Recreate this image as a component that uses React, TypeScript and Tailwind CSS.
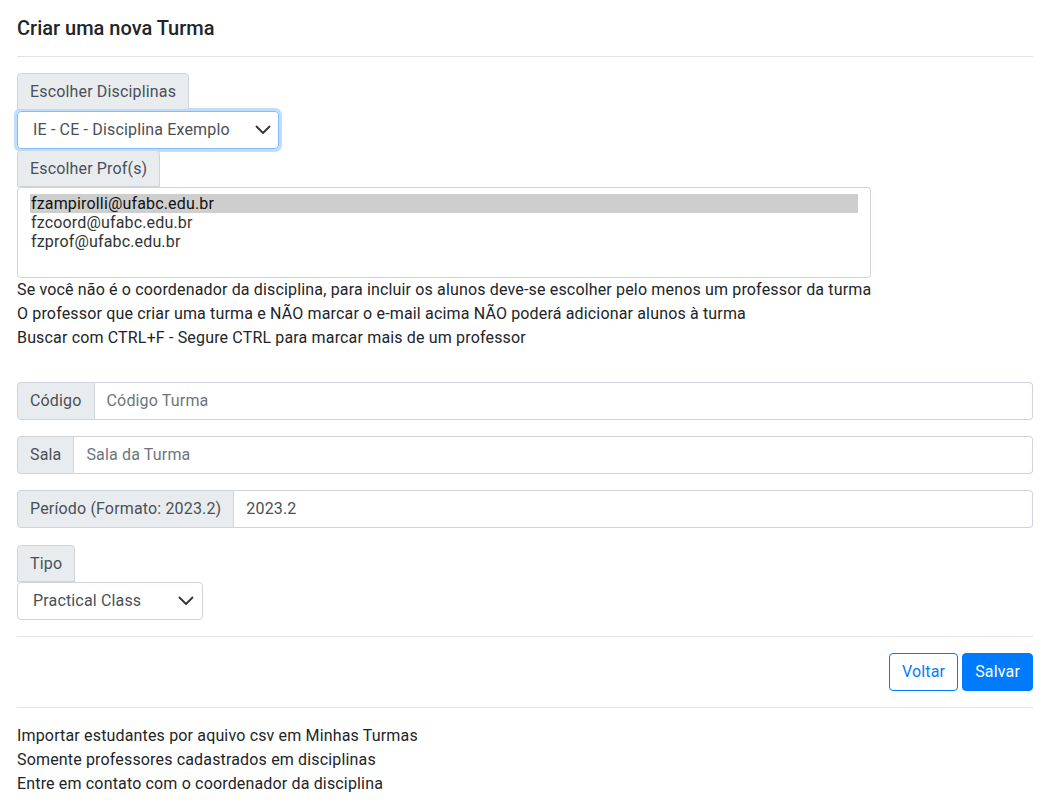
import React from 'react';

const Chevron = () => (
  <svg width="16" height="10" viewBox="0 0 16 10" fill="none" className="shrink-0">
    <path d="M1.5 1.5 L8 8 L14.5 1.5" stroke="#333" strokeWidth="1.8" strokeLinecap="round" strokeLinejoin="round" />
  </svg>
);

const LabelTab = ({ children }: { children: React.ReactNode }) => (
  <div className="flex">
    <span className="flex h-[37px] items-center rounded-t-[4px] border border-[#ced4da] bg-[#e9ecef] px-3 text-[#495057]">
      {children}
    </span>
  </div>
);

type InputGroupProps = { label: string; placeholder?: string; value?: string };

const InputGroup = ({ label, placeholder, value }: InputGroupProps) => (
  <div className="mb-4 flex h-[38px]">
    <span className="flex items-center whitespace-nowrap rounded-l-[4px] border border-[#ced4da] bg-[#e9ecef] px-3 text-[#495057]">
      {label}
    </span>
    <div className="flex flex-1 items-center rounded-r-[4px] border border-l-0 border-[#ced4da] px-3">
      {value ? (
        <span className="text-[#495057]">{value}</span>
      ) : (
        <span className="text-[#6c757d]">{placeholder}</span>
      )}
    </div>
  </div>
);

const profs = ['fzampirolli@ufabc.edu.br', 'fzcoord@ufabc.edu.br', 'fzprof@ufabc.edu.br'];

export default function App() {
  return (
    <div
      className="min-h-screen bg-white px-[17px] pt-4 text-[16px] leading-6 tracking-[0.01em] text-[#212529]"
      style={{ fontFamily: 'Roboto, "Liberation Sans", sans-serif' }}
    >
      <h5 className="text-[20px] font-medium leading-6 tracking-normal">Criar uma nova Turma</h5>
      <hr className="mt-4 mb-4 border-t border-[#e2e2e2]" />

      <LabelTab>Escolher Disciplinas</LabelTab>
      <div className="mt-px flex h-[38px] w-[262px] items-center justify-between rounded-[4px] border border-[#80bdff] pl-[15px] pr-[7px] text-[#495057] shadow-[0_0_0_3px_rgba(0,123,255,0.25)]">
        <span>IE - CE - Disciplina Exemplo</span>
        <Chevron />
      </div>
      <div className="mt-px">
        <LabelTab>Escolher Prof(s)</LabelTab>
      </div>
      <div className="h-[91px] w-[854px] rounded-[4px] border border-[#ced4da] px-3 pt-[6px] text-[16px] leading-[19px] text-[#333]">
        {profs.map((p, i) => (
          <div key={p} className={i === 0 ? 'bg-[#cecece] pl-[1px] text-[#111]' : 'pl-[1px]'}>
            {p}
          </div>
        ))}
      </div>
      <div>
        <div>Se você não é o coordenador da disciplina, para incluir os alunos deve-se escolher pelo menos um professor da turma</div>
        <div>O professor que criar uma turma e NÃO marcar o e-mail acima NÃO poderá adicionar alunos à turma</div>
        <div>Buscar com CTRL+F - Segure CTRL para marcar mais de um professor</div>
      </div>

      <div className="mt-8">
        <InputGroup label="Código" placeholder="Código Turma" />
        <InputGroup label="Sala" placeholder="Sala da Turma" />
        <InputGroup label="Período (Formato: 2023.2)" value="2023.2" />
      </div>

      <div className="mt-[17px]">
        <LabelTab>Tipo</LabelTab>
      </div>
      <div className="flex h-[38px] w-[186px] items-center justify-between rounded-[4px] border border-[#ced4da] pl-[15px] pr-[8px] text-[#495057]">
        <span>Practical Class</span>
        <Chevron />
      </div>

      <hr className="mt-4 mb-4 border-t border-[#e2e2e2]" />
      <div className="flex justify-end gap-1">
        <button className="h-[38px] rounded-[4px] border border-[#007bff] px-3 text-[#007bff]">Voltar</button>
        <button className="h-[38px] rounded-[4px] border border-[#007bff] bg-[#007bff] px-3 text-white">Salvar</button>
      </div>
      <hr className="mt-4 mb-4 border-t border-[#e2e2e2]" />
      <div>
        <div>Importar estudantes por aquivo csv em Minhas Turmas</div>
        <div>Somente professores cadastrados em disciplinas</div>
        <div>Entre em contato com o coordenador da disciplina</div>
      </div>
    </div>
  );
}
